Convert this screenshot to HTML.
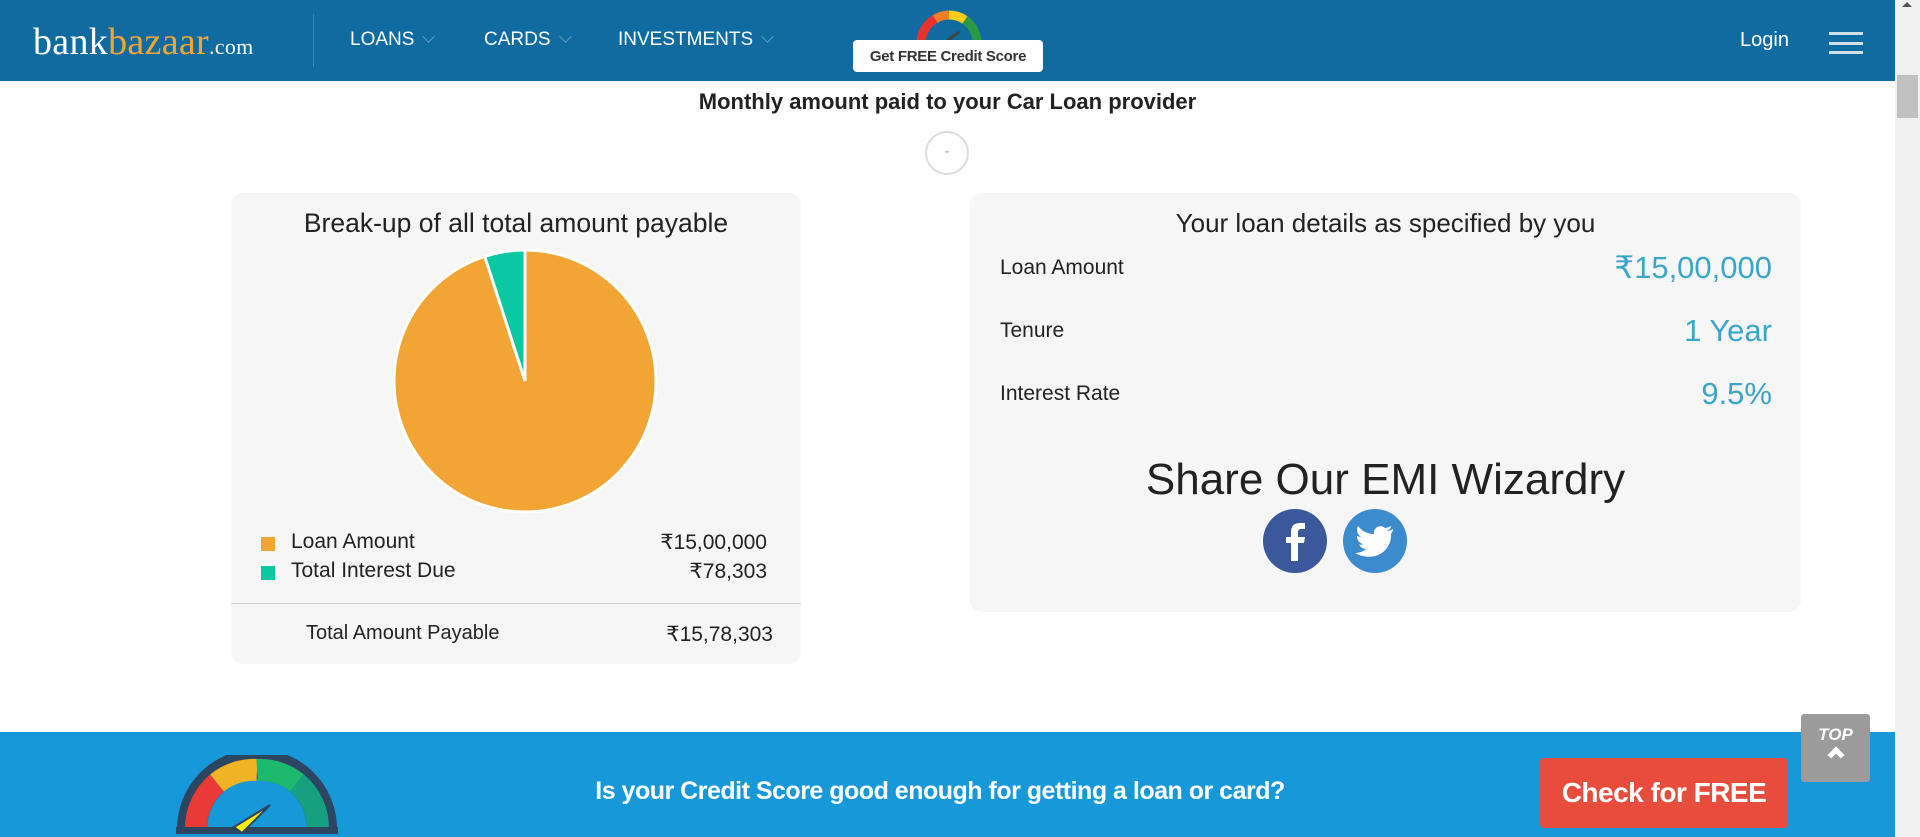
<!DOCTYPE html>
<html><head><meta charset="utf-8"><style>
*{margin:0;padding:0;box-sizing:border-box}
body{width:1920px;height:837px;overflow:hidden;background:#fff;font-family:"Liberation Sans",sans-serif;position:relative;color:#222}
.a{position:absolute;white-space:nowrap}
.hdr{position:absolute;left:0;top:0;width:1895px;height:81px;background:#106ba0}
.nav{color:#fff;font-size:19px;top:29px}
.chev{display:inline-block;width:9px;height:9px;border-right:1px solid #5d9bc3;border-bottom:1px solid #5d9bc3;transform:rotate(45deg);margin-left:10px;position:relative;top:-4px}
.card{position:absolute;background:#f6f6f6;border-radius:12px}
.lbl{font-size:21px;color:#222}
.val{font-size:31px;color:#3aa6c9;text-align:right}
</style></head><body>
<div class="hdr"></div>
<div class="a" style="left:33px;top:20px;font-family:'Liberation Serif',serif;font-size:38px;color:#fff;letter-spacing:0.3px">bank<span style="color:#f2a533">bazaar</span><span style="font-size:22px">.com</span></div>
<div class="a" style="left:313px;top:14px;width:1px;height:53px;background:#3b86b5"></div>
<div class="a nav" style="left:350px">LOANS<span class="chev"></span></div>
<div class="a nav" style="left:484px">CARDS<span class="chev"></span></div>
<div class="a nav" style="left:618px">INVESTMENTS<span class="chev"></span></div>
<svg class="a" style="left:913px;top:6px" width="72" height="40" viewBox="0 0 72 40">
<path d="M8 38 A28 28 0 0 1 22 13" stroke="#e8322e" stroke-width="9" fill="none"/>
<path d="M22 13 A28 28 0 0 1 36 9" stroke="#f07d22" stroke-width="9" fill="none"/>
<path d="M36 9 A28 28 0 0 1 52 14" stroke="#f8cc1b" stroke-width="9" fill="none"/>
<path d="M52 14 A28 28 0 0 1 64 38" stroke="#2a9a46" stroke-width="9" fill="none"/>
<path d="M30 38 L46 26" stroke="#444" stroke-width="3"/>
</svg>
<div class="a" style="left:853px;top:40px;width:190px;height:32px;background:#fff;border-radius:4px;color:#333;font-weight:bold;font-size:15px;text-align:center;line-height:34px;letter-spacing:-0.3px">Get FREE Credit Score</div>
<div class="a" style="left:1740px;top:29px;color:#fff;font-size:20px">Login</div>
<div class="a" style="left:1829px;top:32px;width:34px;height:3px;background:#cfe0ea"></div>
<div class="a" style="left:1829px;top:42px;width:34px;height:3px;background:#cfe0ea"></div>
<div class="a" style="left:1829px;top:51px;width:34px;height:3px;background:#cfe0ea"></div>
<div class="a" style="left:1895px;top:0;width:25px;height:837px;background:#f0f0f0"></div>
<div class="a" style="left:1897px;top:75px;width:21px;height:43px;background:#c1c1c1"></div>
<div class="a" style="left:1902px;top:2px;width:0;height:0;border-left:5px solid transparent;border-right:5px solid transparent;border-bottom:5px solid #555"></div>

<div class="a" style="left:0;width:1895px;top:89px;text-align:center;font-size:22px;font-weight:bold;color:#222">Monthly amount paid to your Car Loan provider</div>
<div class="a" style="left:925px;top:131px;width:44px;height:44px;border:2px solid #ddd;border-radius:50%;text-align:center;line-height:38px;color:#aaa;font-size:16px">-</div>

<div class="card" style="left:231px;top:193px;width:570px;height:471px"></div>
<div class="a" style="left:231px;width:570px;top:208px;text-align:center;font-size:26.5px">Break-up of all total amount payable</div>
<svg class="a" style="left:390px;top:246px" width="270" height="270" viewBox="390 246 270 270">
<circle cx="525" cy="381" r="131" fill="#f2a535" stroke="#fff" stroke-width="3"/>
<path d="M525 381 L525 250 A131 131 0 0 0 484.7 256.4 Z" fill="#0cc8a2" stroke="#fff" stroke-width="3"/>
</svg>
<div class="a" style="left:261px;top:537px;width:14px;height:14px;background:#f2a535"></div>
<div class="a" style="left:261px;top:566px;width:14px;height:14px;background:#0cc8a2"></div>
<div class="a lbl" style="left:291px;top:530px">Loan Amount</div>
<div class="a lbl" style="left:291px;top:559px">Total Interest Due</div>
<div class="a lbl" style="right:1153px;top:530px">₹15,00,000</div>
<div class="a lbl" style="right:1153px;top:559px">₹78,303</div>
<div class="a" style="left:231px;top:603px;width:570px;height:1px;background:#ccc"></div>
<div class="a lbl" style="left:306px;top:622px;font-size:20px">Total Amount Payable</div>
<div class="a lbl" style="right:1147px;top:622px">₹15,78,303</div>

<div class="card" style="left:970px;top:193px;width:831px;height:419px"></div>
<div class="a" style="left:970px;width:831px;top:208px;text-align:center;font-size:26px">Your loan details as specified by you</div>
<div class="a lbl" style="left:1000px;top:256px">Loan Amount</div>
<div class="a lbl" style="left:1000px;top:319px">Tenure</div>
<div class="a lbl" style="left:1000px;top:382px">Interest Rate</div>
<div class="a val" style="right:148px;top:250px">₹15,00,000</div>
<div class="a val" style="right:148px;top:313px">1 Year</div>
<div class="a val" style="right:148px;top:376px">9.5%</div>
<div class="a" style="left:970px;width:831px;top:455px;text-align:center;font-size:44px;color:#222">Share Our EMI Wizardry</div>
<svg class="a" style="left:1262px;top:508px" width="150" height="66" viewBox="1262 508 150 66">
<circle cx="1295" cy="541" r="32" fill="#3a589b"/>
<path d="M1298 561 V543 H1304 L1305 537 H1298 V532 C1298 530 1299 529 1301 529 H1305 V523 H1300 C1294 523 1291 526 1291 532 V537 H1286 V543 H1291 V561 Z" fill="#fff"/>
<circle cx="1375" cy="541" r="32" fill="#3d8bcf"/>
<path d="M1393 529 C1391 530 1389 531 1387 531 C1389 530 1391 528 1391 526 C1389 527 1387 528 1385 528 C1381 524 1373 527 1374 534 C1367 534 1362 531 1358 526 C1356 530 1357 534 1361 537 C1359 537 1358 536 1357 536 C1357 540 1359 543 1363 544 C1362 545 1360 545 1359 544 C1360 547 1363 549 1366 549 C1363 552 1358 553 1355 553 C1373 563 1392 552 1391 534 C1392 532 1393 531 1393 529 Z" fill="#fff"/>
</svg>

<div class="a" style="left:0;top:732px;width:1895px;height:105px;background:#1798d8"></div>
<svg class="a" style="left:172px;top:755px" width="170" height="80" viewBox="0 0 170 80">
<path d="M20 74 A62 62 0 0 1 150 74" stroke="#2c4560" stroke-width="30" fill="none"/>
<path d="M24 74 A59 59 0 0 1 45 28" stroke="#e93a35" stroke-width="22" fill="none"/>
<path d="M45 28 A59 59 0 0 1 85 15" stroke="#f0b323" stroke-width="22" fill="none"/>
<path d="M85 15 A59 59 0 0 1 125 28" stroke="#1cb96d" stroke-width="22" fill="none"/>
<path d="M125 28 A59 59 0 0 1 146 74" stroke="#17a080" stroke-width="22" fill="none"/>
<rect x="4" y="72" width="162" height="7" fill="#2c4560"/>
<path d="M62 72 L98 50 L70 78 Z" fill="#ffee00" stroke="#2c4560" stroke-width="2"/>
</svg>
<div class="a" style="left:560px;width:760px;top:777px;text-align:center;color:#fff;font-weight:bold;font-size:25px;letter-spacing:-0.5px">Is your Credit Score good enough for getting a loan or card?</div>
<div class="a" style="left:1540px;top:758px;width:248px;height:70px;background:#e84c3d;border-radius:4px;color:#fff;font-weight:bold;font-size:28px;text-align:center;line-height:70px;letter-spacing:-0.5px">Check for FREE</div>
<div class="a" style="left:1801px;top:714px;width:69px;height:68px;background:#9b9b9b;border-radius:3px;color:#fff;font-weight:bold;font-style:italic;font-size:17px;text-align:center;padding-top:11px">TOP<div style="width:12px;height:12px;border-left:5px solid #fff;border-top:5px solid #fff;transform:rotate(45deg);margin:4px auto 0"></div></div>
</body></html>
